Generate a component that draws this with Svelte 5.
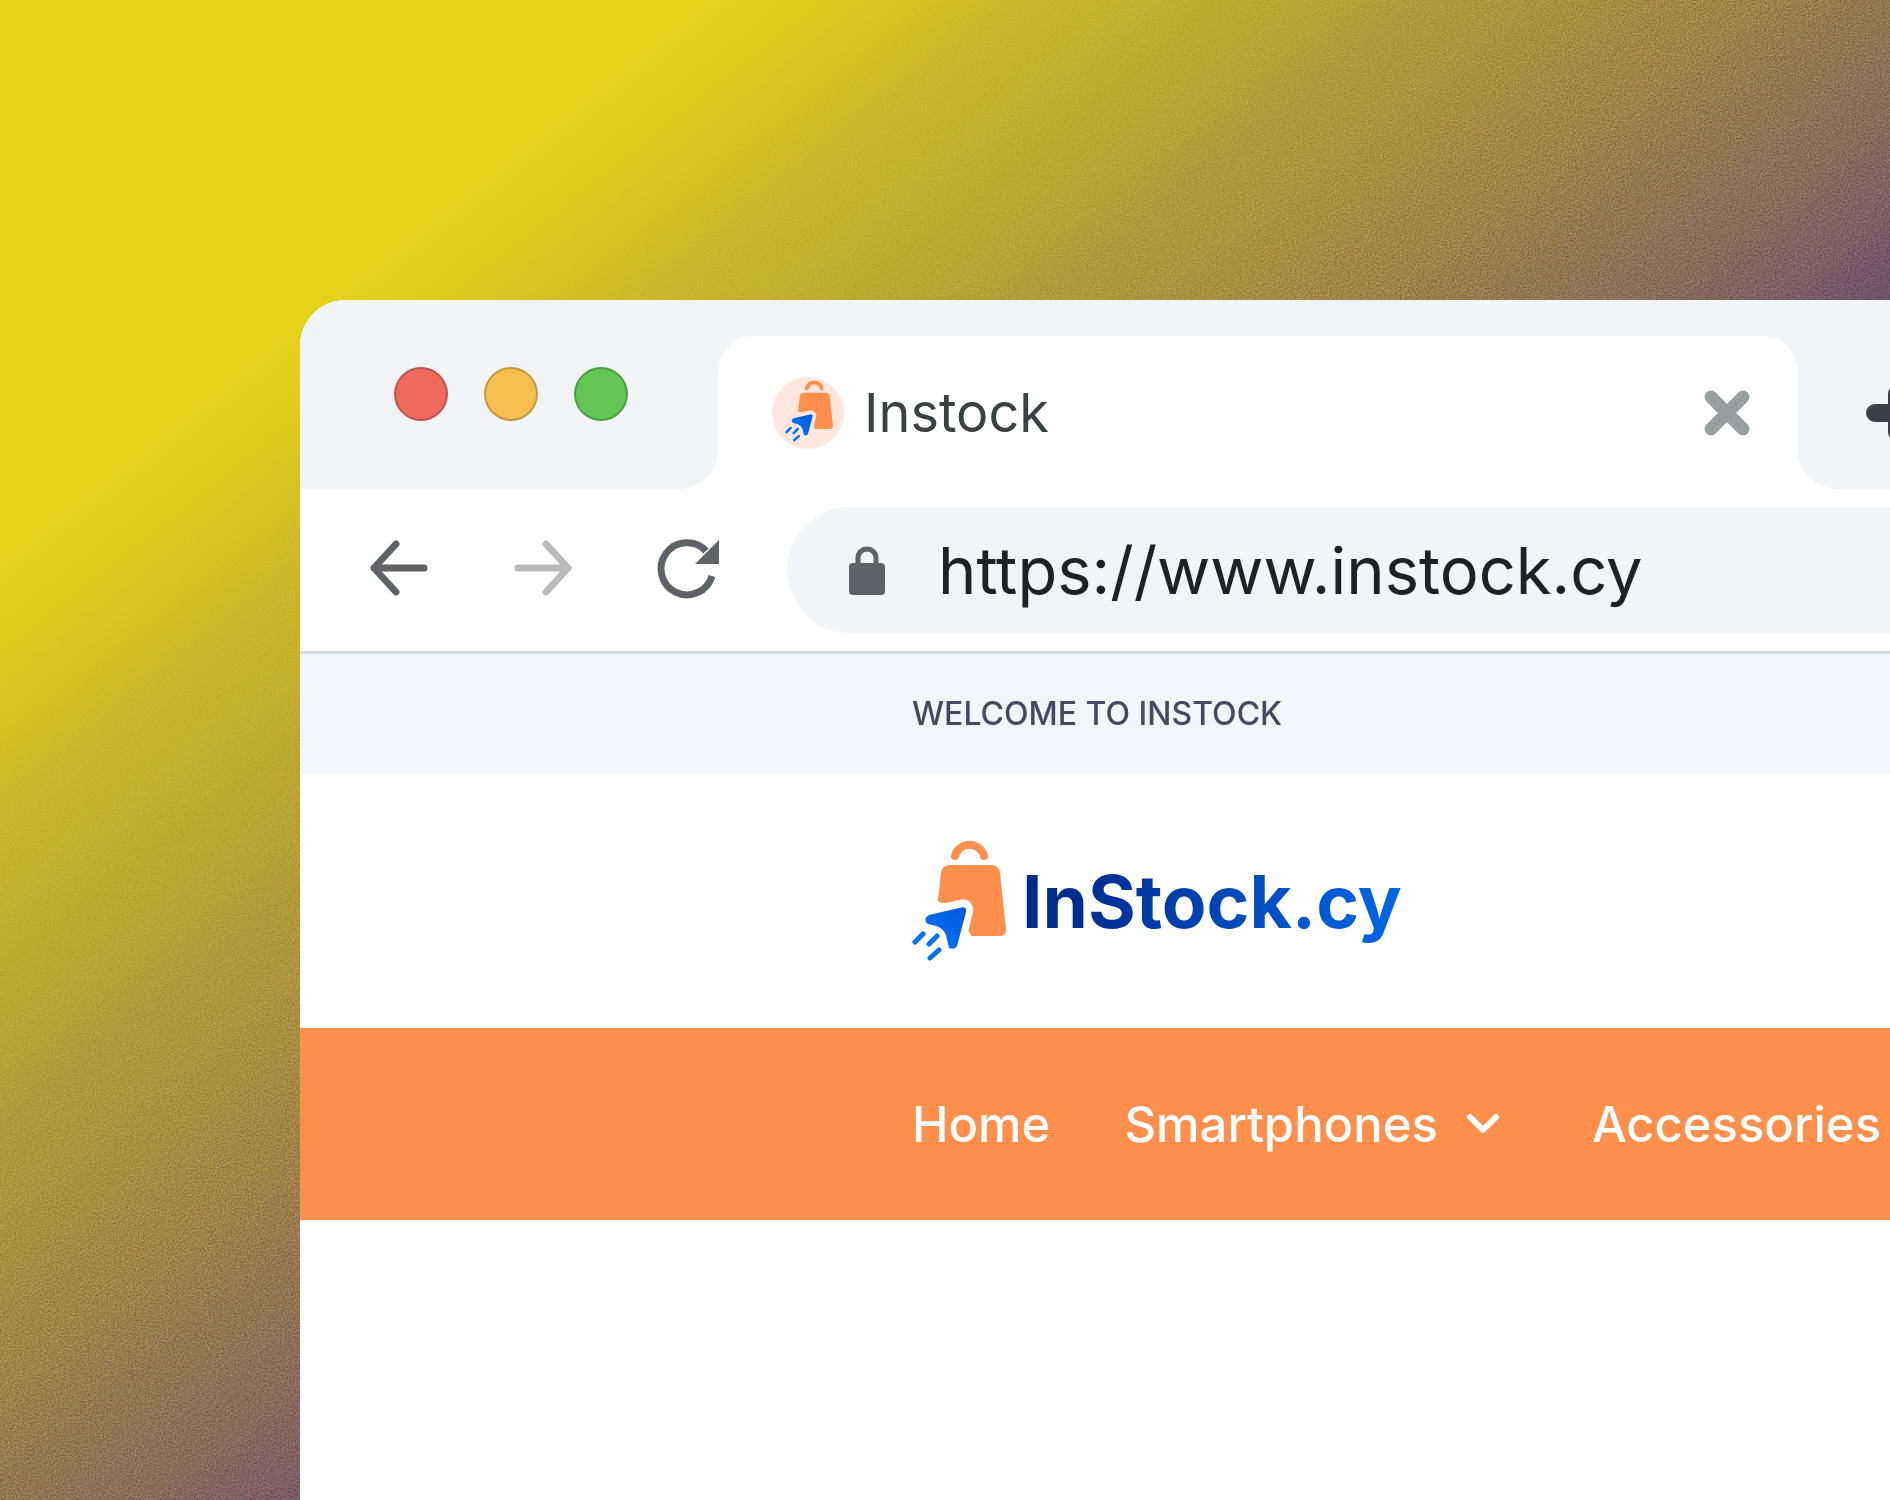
<script lang="ts">
  const controls = [
    { id: "close", label: "Close window" },
    { id: "minimize", label: "Minimize window" },
    { id: "zoom", label: "Zoom window" },
  ];

  let url = $state("https://www.instock.cy");
</script>

{#snippet bag(gap: string)}
  <path d="M43 20a15 15 0 0 1 29 0" fill="none" stroke="#ff8f4a" stroke-width="8" stroke-linecap="round" />
  <path d="M38 29H79Q87 29 88 37L94 94Q94 100 87 100H61Q58 100 58 97L33 67Q26 67 26 64L29 37Q30 29 38 29Z" fill="#ff8f4a" />
  <path
    d="M17 79 50 71.500Q54 71 53 75L45 109Q43 113 39 110L35 99Q31 92 24 90L15 86Q12 82 17 79Z"
    fill={gap}
    stroke={gap}
    stroke-width="16"
    stroke-linejoin="round"
  />
  <path d="M17 79 49 71.500Q55 70 54 76L45 110Q43 114 37 112L34 99Q31 92 24 90L16 88Q10 83 17 79Z" fill="url(#pointer)" />
  <path d="M11 98 3 106M25 100 17 108M27 114 18 122" stroke="#0573f3" stroke-width="5" stroke-linecap="round" />
{/snippet}

<svg class="defs" aria-hidden="true">
  <defs>
    <linearGradient id="pointer" x1="1" y1="0" x2="0" y2="1">
      <stop offset="0" stop-color="#0059d8" />
      <stop offset="1" stop-color="#0078ff" />
    </linearGradient>
  </defs>
</svg>

<div class="backdrop">
  <svg class="grain" aria-hidden="true">
    <filter id="noise" x="0" y="0" width="100%" height="100%" color-interpolation-filters="sRGB">
      <feTurbulence type="fractalNoise" baseFrequency="0.6" numOctaves="2" />
      <feColorMatrix values="1 0 0 0 0  0 1 0 0 0  0 0 1 0 0  0 0 0 0 1" />
      <feColorMatrix type="saturate" values="0.4" />
    </filter>
    <rect width="100%" height="100%" filter="url(#noise)" />
  </svg>

  <div class="window">
    <div class="tab-strip">
      <div class="controls">
        {#each controls as control}
          <button class="control {control.id}" aria-label={control.label}></button>
        {/each}
      </div>
      <div class="tab">
        <svg class="favicon" viewBox="0 0 72 72" aria-hidden="true">
          <circle cx="36" cy="36" r="36" fill="#ffe7df" />
          <g transform="translate(13 1) scale(0.51)">{@render bag("#ffe7df")}</g>
        </svg>
        <span class="title">Instock</span>
        <button class="icon-button" aria-label="Close tab">
          <svg width="46" height="46" viewBox="0 0 46 46">
            <path d="M7 7 39 39M39 7 7 39" stroke="#9a9d9f" stroke-width="13" stroke-linecap="round" />
          </svg>
        </button>
      </div>
      <div class="strip-end">
        <button class="icon-button" aria-label="New tab">
          <svg width="56" height="56" viewBox="0 0 56 56">
            <path d="M9 28H47M31 9V47" stroke="#3a4144" stroke-width="18" stroke-linecap="round" />
          </svg>
        </button>
      </div>
    </div>

    <div class="toolbar">
      <button class="icon-button" aria-label="Back">
        <svg width="60" height="60" viewBox="0 2 60 60">
          <path d="M55 30H5M27 6 5 30 27 54" fill="none" stroke="#5f6368" stroke-width="7" stroke-linecap="round" stroke-linejoin="round" />
        </svg>
      </button>
      <button class="icon-button" aria-label="Forward" disabled>
        <svg width="60" height="60" viewBox="0 2 60 60">
          <path d="M5 30H55M33 6 55 30 33 54" fill="none" stroke="#bababa" stroke-width="7" stroke-linecap="round" stroke-linejoin="round" />
        </svg>
      </button>
      <button class="icon-button" aria-label="Reload">
        <svg width="64" height="60" viewBox="0 1 64 60">
          <path d="M55 37A26 26 0 1 1 49 12" fill="none" stroke="#5f6368" stroke-width="7" />
          <path d="M62 1V25H38Z" fill="#5f6368" />
        </svg>
      </button>
      <label class="address">
        <svg width="38" height="52" viewBox="0 0 38 52" aria-hidden="true">
          <path d="M10 22V14a9 9 0 0 1 18 0v8" fill="none" stroke="#5f6368" stroke-width="5" />
          <rect x="1" y="19" width="36" height="32" rx="4" fill="#5f6368" />
        </svg>
        <input type="text" aria-label="Address" bind:value={url} />
      </label>
    </div>

    <div class="welcome">WELCOME TO INSTOCK</div>

    <header>
      <a class="brand" href="/">
        <svg width="96" height="126" viewBox="0 2 96 126" aria-hidden="true">{@render bag("#fff")}</svg>
        <span>InStock.cy</span>
      </a>
    </header>

    <nav>
      <a href="/">Home</a>
      <a class="has-menu" href="/smartphones">
        Smartphones
        <svg width="34" height="24" viewBox="0 0 34 24" aria-hidden="true">
          <path d="M4 5 17 18 30 5" fill="none" stroke="#fff" stroke-width="6" stroke-linecap="round" stroke-linejoin="round" />
        </svg>
      </a>
      <a href="/accessories">Accessories</a>
    </nav>
  </div>
</div>

<style>
  .defs {
    position: absolute;
    width: 0;
    height: 0;
  }

  .backdrop {
    position: relative;
    box-sizing: border-box;
    min-height: 100vh;
    padding: 300px 0 0 300px;
    display: flex;
    overflow: hidden;
    font-family: Inter, "Liberation Sans", sans-serif;
    background: linear-gradient(to bottom right, #e5d418 0%, #e5d418 18%, #dccb1e 22%, #cbb828 27%, #b5a036 36%, #a08347 46%, #8a6a5c 54%, #6a4d70 61%, #52408c 75%);
  }

  .grain {
    position: absolute;
    inset: 0;
    width: 100%;
    height: 100%;
    opacity: 0.5;
    mix-blend-mode: overlay;
    mask-image: linear-gradient(to bottom right, transparent 18%, #000 45%);
  }

  .window {
    position: relative;
    flex: 1;
    min-width: 0;
    overflow: hidden;
    background: #fff;
    border-radius: 46px 0 0 0;
  }

  .icon-button {
    flex: none;
    display: flex;
    padding: 0;
    border: 0;
    background: none;
  }

  .icon-button svg {
    overflow: visible;
  }

  .tab-strip {
    display: flex;
    height: 189px;
    background: linear-gradient(#f2f4f8 50%, #fff 50%);
  }

  .controls,
  .strip-end {
    box-sizing: border-box;
    flex: none;
    display: flex;
    background: #f2f4f8;
  }

  .controls {
    gap: 36px;
    width: 418px;
    padding: 67px 0 0 94px;
    border-bottom-right-radius: 38px;
  }

  .control {
    box-sizing: border-box;
    width: 54px;
    height: 54px;
    padding: 0;
    border: 2px solid rgb(0 0 0 / 20%);
    border-radius: 50%;
  }

  .close {
    background: #ee6a5f;
  }

  .minimize {
    background: #f5bf4f;
  }

  .zoom {
    background: #61c654;
  }

  .tab {
    flex: 1;
    display: flex;
    align-items: center;
    gap: 20px;
    margin-top: 36px;
    padding: 0 48px 0 54px;
    background: #fff;
    border-radius: 36px 36px 0 0;
  }

  .favicon {
    width: 72px;
    height: 72px;
  }

  .title {
    flex: 1;
    font-size: 54px;
    color: #3c4043;
  }

  .strip-end {
    align-items: center;
    width: 92px;
    padding: 36px 0 0 68px;
    border-bottom-left-radius: 38px;
  }

  .toolbar {
    display: flex;
    align-items: center;
    height: 162px;
    gap: 84px;
    padding-left: 69px;
    border-bottom: 3px solid #d9dbde;
  }

  .address {
    flex: 1;
    display: flex;
    align-items: center;
    gap: 52px;
    height: 126px;
    margin-left: -18px;
    padding-left: 61px;
    background: #f2f4f8;
    border-radius: 63px 0 0 63px;
  }

  .address input {
    flex: 1;
    min-width: 0;
    padding: 0;
    border: 0;
    outline: 0;
    background: none;
    font: inherit;
    font-size: 65px;
    color: #202124;
  }

  .welcome {
    padding-left: 612px;
    font-size: 32px;
    line-height: 120px;
    font-weight: 500;
    color: #444963;
    background: #f1f5fd;
  }

  header {
    display: flex;
    align-items: center;
    height: 254px;
    padding-left: 612px;
  }

  .brand {
    display: flex;
    align-items: center;
    gap: 14px;
    font-size: 73px;
    font-weight: 700;
    text-decoration: none;
  }

  .brand span {
    color: transparent;
    background: linear-gradient(100deg, #002c90 15%, #0068e8);
    background-clip: text;
  }

  nav {
    display: flex;
    align-items: center;
    gap: 74px;
    height: 192px;
    padding-left: 612px;
    background: #ff8f4a;
  }

  nav a {
    display: flex;
    align-items: center;
    gap: 28px;
    font-size: 49px;
    font-weight: 500;
    color: #fff;
    text-decoration: none;
  }

  .has-menu {
    padding-right: 18px;
  }
</style>
